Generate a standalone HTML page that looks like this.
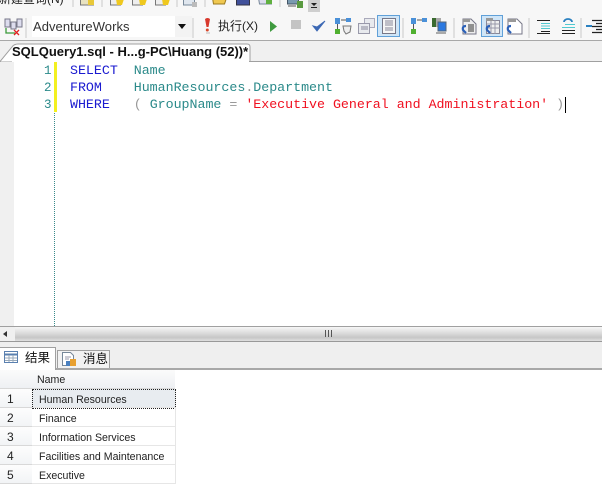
<!DOCTYPE html>
<html><head><meta charset="utf-8">
<style>
html,body{margin:0;padding:0;background:#fff}
#r{position:relative;width:602px;height:495px;overflow:hidden;background:#fff;font-family:"Liberation Sans","Noto Sans CJK SC",sans-serif}
#r>*{position:absolute}
.t{white-space:pre}
.m{font:13.33px/17px "Liberation Mono",monospace;letter-spacing:-.03px;white-space:pre;left:70px}
.k{color:#1a1ad0}.g{color:#2b8a8a}.s{color:#f01020}.o{color:#999}
.ln{font:12.5px/17px "Liberation Mono",monospace;color:#2b8a8a;left:44px;width:10px}
.rh{left:0;width:32px;height:18px;background:linear-gradient(#fdfdfd,#f2f4f6);border-bottom:1px solid #d8d8d8;font:12px/20px "Liberation Sans",sans-serif;color:#222;text-indent:7px}
.rc{left:32px;width:143px;height:18px;border-bottom:1px solid #e6e6e6;border-right:1px solid #e6e6e6;font:10.6px/23px "Liberation Sans",sans-serif;color:#222;text-indent:7px;white-space:pre;overflow:visible}
</style></head><body>
<div id="r">
<div style="left:0;top:0;width:602px;height:41px;background:#f7f7f7"></div>
<div class="t" style="left:-1px;top:-9px;font-size:12px;line-height:16px;color:#222">新建查询(N)</div>
<div style="left:0;top:41px;width:602px;height:20px;background:#f0f0f0"></div>
<div style="left:0;top:40px;width:602px;height:1px;background:#a8a8a8"></div>
<div style="left:0;top:61px;width:602px;height:1px;background:#a0a0a0"></div>

<svg style="left:0;top:0;filter:blur(.35px)" width="602" height="42" viewBox="0 0 602 42">
<g fill="none">
<!-- top row clipped icons -->
<path d="M73 0v7M102 0v7M177 0v7M205 0v7M280 0v7" stroke="#c8c8c8"/>
<path d="M80.500 -2h13v7h-13z" fill="#e8e2c0" stroke="#777"/><path d="M88 -1h6v6h-6z" fill="#e8c838"/>
<path d="M110.500 -2h10v7h-10z" fill="#eee" stroke="#777"/><path d="M116 -1h8l-2 6h-5z" fill="#efc81e"/>
<path d="M132.500 -2h10v7h-10z" fill="#eee" stroke="#777"/><path d="M139 -1h8l-2 6h-5z" fill="#efc81e"/>
<path d="M155.500 -2h10v7h-10z" fill="#eee" stroke="#777"/><path d="M162 -1h8l-2 6h-5z" fill="#efc81e"/>
<path d="M183.500 -2h11v7h-11z" fill="#dfe6ee" stroke="#789"/><path d="M192 2h5v5h-5z" fill="#bbb"/>
<path d="M212.500 -2h14l-2 6h-11z" fill="#f0c850" stroke="#9a7a20"/>
<path d="M236.500 -2h13v7h-13z" fill="#40509a" stroke="#334"/>
<path d="M258.500 -2h13v6h-12z" fill="#dde" stroke="#789"/><path d="M266 0h6v4h-6z" fill="#60b040"/>
<path d="M287.500 -1h11v5h-11z" fill="#7a9ab0" stroke="#456"/><path d="M297 1h6v7h-6z" fill="#5a9a40"/><path d="M288 6h8" stroke="#555"/>
<rect x="308" y="0" width="12" height="12" fill="#cfcfcf"/>
<path d="M311 3h6l-3 3z M311 7h6v1h-6z" fill="#222"/>
<!-- connection icon -->
<rect x="5" y="19" width="5" height="8" fill="#dde" stroke="#778"/><rect x="11" y="22" width="5" height="7" fill="#dde" stroke="#778"/><rect x="17" y="19" width="5" height="8" fill="#dde" stroke="#778"/>
<path d="M6 28v5h9" stroke="#3a9a3a" stroke-width="1.300"/><path d="M14 30l5 5M19 30l-5 5" stroke="#e02020" stroke-width="1.300"/>
<path d="M26 18v20M193 18v20" stroke="#c8c8c8"/>
<!-- ! -->
<path d="M205 19q2.500-2 5 0l-1.500 8h-2z" fill="#d8382c"/><circle cx="207.300" cy="30" r="1.500" fill="#d8482c"/><path d="M206 33h4" stroke="#bbb"/>
<path d="M270 21l7 5.500-7 5.500z" fill="#3f9a3f"/>
<rect x="291" y="20" width="10" height="9" fill="#c4c4c4"/>
<path d="M313 26l4 5 8-10-8 6z" fill="#3c68b4" stroke="#3c68b4"/>
<!-- parse/plan icons -->
<rect x="335" y="18" width="5" height="6" fill="#4a90d8"/><rect x="335" y="29" width="5" height="5" fill="#50b030"/><path d="M337.500 24v5" stroke="#555"/><rect x="346" y="18" width="5" height="4" fill="#4a90d8"/><path d="M341 20h5" stroke="#555"/>
<path d="M343 26h8l-1 6-4 2-2-3z" fill="#eee" stroke="#777"/>
<rect x="364.500" y="18.500" width="10" height="9" fill="#e8eaee" stroke="#aab"/><rect x="358.500" y="23.500" width="11" height="10" fill="#e8eaee" stroke="#99a"/><path d="M361 27h7M361 29h7" stroke="#889"/>
<rect x="377.500" y="15.500" width="22" height="21" fill="#cfe5f7" stroke="#60a0d8"/>
<rect x="382.500" y="18.500" width="13" height="15" fill="#f6f6f6" stroke="#778"/><path d="M385 21h8M385 23h8M385 25h8M385 28h8M385 30h8" stroke="#889"/>
<path d="M403 18v20M454 18v20M529 18v20M581 18v20" stroke="#c8c8c8"/>
<rect x="411" y="18" width="5" height="6" fill="#4a90d8"/><rect x="411" y="29" width="5" height="5" fill="#50b030"/><path d="M413.500 24v5M417 20h5" stroke="#555"/><rect x="422" y="18" width="5" height="4" fill="#4a90d8"/>
<rect x="432" y="18" width="4" height="9" fill="#3a6a30"/><rect x="436" y="18" width="5" height="9" fill="#aaa"/><rect x="438" y="22" width="8" height="9" fill="#2a78e0" stroke="#567"/><path d="M436 33h10" stroke="#aaa" stroke-width="2"/>
<!-- results icons -->
<path d="M463 19h8l5 5v10h-13z" fill="#eee" stroke="#778"/><path d="M468 25h6M468 27h6M468 29h6M468 31h6" stroke="#333"/><rect x="463" y="19" width="7" height="3" fill="#999"/><path d="M466 26q-4 0-3 4l3 3" stroke="#2a60b8" stroke-width="2.200"/>
<rect x="481.500" y="15.500" width="21" height="21" fill="#cfe5f7" stroke="#60a0d8"/>
<path d="M486.500 20.500h13v13h-13z" fill="#eee" stroke="#889"/><path d="M487 24h13M487 28h13M491 20v14M495 20v14" stroke="#99a"/><rect x="486" y="18" width="7" height="3" fill="#999"/><path d="M490 26q-4 0-3 4l3 3" stroke="#2a60b8" stroke-width="2.200"/>
<path d="M508 19h9l5 5v10h-14z" fill="#fff" stroke="#778"/><rect x="508" y="19" width="8" height="3" fill="#999"/><path d="M511 26q-4 0-3 4l3 3" stroke="#2a60b8" stroke-width="2.200"/>
<!-- indent -->
<path d="M537 20.500h13M541 31.500h9M537 33.500h13" stroke="#222"/><path d="M541 23.500h9M541 26h9M541 28.500h9" stroke="#50c8d0"/>
<path d="M562 30.500h13M562 33.500h13" stroke="#222"/><path d="M562 27.500h13M565 24.500h10" stroke="#50c8d0"/><path d="M564 22a4 3 0 0 1 8 0" stroke="#2a80c0" stroke-width="1.800"/>
<path d="M592 20.500h10M596 23.500h6M592 26.500h10M596 29.500h6M592 32.500h10" stroke="#222" stroke-width="1.200"/><path d="M586 26h6" stroke="#2a80c0" stroke-width="2"/>
</g>
</svg>

<div style="left:32px;top:16px;width:160px;height:21px;background:#fff"></div>
<div style="left:175px;top:16px;width:17px;height:21px;background:#f3f3f3"></div>
<div class="t" style="left:33px;top:18px;font-size:13px;line-height:17px;color:#333;letter-spacing:.05px">AdventureWorks</div>
<div style="left:178px;top:24px;width:0;height:0;border:4px solid transparent;border-top:5px solid #111;border-bottom:0"></div>
<div class="t" style="left:218px;top:18px;font-size:12px;line-height:17px;color:#222">执行(X)</div>

<svg style="left:0;top:41px" width="260" height="22" viewBox="0 0 260 22"><path d="M0 20.500 12 6Q14 3 18 3H247Q250 3 250 6V20" fill="#fff" stroke="#a0a0a0"/><path d="M12 21h237" stroke="#fff" stroke-width="2"/></svg>
<div class="t" style="left:12px;top:44px;font-size:13px;line-height:16px;font-weight:bold;color:#111">SQLQuery1.sql - H...g-PC\Huang (52))*</div>

<div style="left:0;top:62px;width:14px;height:264px;background:#f0f0f0"></div>
<div style="left:54px;top:62px;width:0;height:264px;border-left:1px dotted #3a8a8a"></div>
<div style="left:54px;top:62px;width:3px;height:50px;background:#f3f020"></div>
<div class="ln" style="top:63px">1</div>
<div class="ln" style="top:80px">2</div>
<div class="ln" style="top:97px">3</div>
<div class="m" style="top:63px"><span class="k">SELECT</span>  <span class="g">Name</span></div>
<div class="m" style="top:80px"><span class="k">FROM</span>    <span class="g">HumanResources</span><span class="o">.</span><span class="g">Department</span></div>
<div class="m" style="top:97px"><span class="k">WHERE</span>   <span class="o">(</span> <span class="g">GroupName</span> <span class="o">=</span> <span class="s">'Executive General and Administration'</span> <span class="o">)</span></div>
<div style="left:565px;top:97px;width:1px;height:16px;background:#000"></div>

<div style="left:0;top:326px;width:602px;height:1px;background:#a0a0a0"></div>
<div style="left:15px;top:327px;width:587px;height:14px;background:linear-gradient(#f6f6f6,#d8d8d8 50%,#c6c6c6 75%,#e0e0e0)"></div>
<div style="left:0;top:327px;width:15px;height:14px;background:#f0f0f0"></div>
<div style="left:3px;top:331px;width:0;height:0;border:3.500px solid transparent;border-right:4px solid #333;border-left:0"></div>
<div style="left:325px;top:330px;width:7px;height:7px;background:repeating-linear-gradient(90deg,#555 0 1px,transparent 1px 3px)"></div>
<div style="left:0;top:341px;width:602px;height:1px;background:#999"></div>
<div style="left:0;top:342px;width:602px;height:26px;background:#efefef"></div>
<div style="left:0;top:368px;width:602px;height:2px;background:#a8a8a8"></div>
<div style="left:0;top:347px;width:56px;height:23px;background:#fff;border-right:1px solid #a0a0a0;border-top:1px solid #a0a0a0;box-sizing:border-box"></div>
<div style="left:57px;top:350px;width:53px;height:18px;background:#f2f2f2;border:1px solid #a0a0a0;border-bottom:0;box-sizing:border-box"></div>
<svg style="left:0;top:348px;filter:blur(.3px)" width="110" height="20" viewBox="0 0 110 20">
<rect x="4.500" y="3.500" width="13" height="11" fill="#fff" stroke="#5a80b0"/><path d="M4 6.500h14" stroke="#5a80b0" stroke-width="2"/><path d="M9 7v7M13 7v7M5 10h12M5 12.500h12" stroke="#9ab"/>
<path d="M62.500 4.500h8l3 3v10h-11z" fill="#fff" stroke="#789"/><path d="M65 9h6M65 11h4" stroke="#99a"/><rect x="70" y="11" width="6" height="7" fill="#e8a030"/><rect x="66" y="13" width="4" height="5" fill="#4a80c0"/>
</svg>
<div class="t" style="left:25px;top:350px;font-size:12.500px;line-height:17px;color:#111">结果</div>
<div class="t" style="left:83px;top:351px;font-size:12.500px;line-height:17px;color:#111">消息</div>

<div style="left:0;top:370px;width:32px;height:18px;background:linear-gradient(#fbfbfb,#eef0f3);border-bottom:1px solid #d8d8d8"></div>
<div style="left:32px;top:370px;width:143px;height:18px;background:linear-gradient(#fbfbfb,#eef0f3);border-bottom:1px solid #d8d8d8;font:10.600px/21px 'Liberation Sans',sans-serif;color:#222;text-indent:5px">Name</div>
<div class="rh" style="top:389px">1</div><div class="rc" style="top:389px;background:#e8ecf0">Human Resources</div>
<div style="left:32px;top:389px;width:142px;height:18px;border:1px dotted #222"></div>
<div class="rh" style="top:408px">2</div><div class="rc" style="top:408px">Finance</div>
<div class="rh" style="top:427px">3</div><div class="rc" style="top:427px">Information Services</div>
<div class="rh" style="top:446px">4</div><div class="rc" style="top:446px">Facilities and Maintenance</div>
<div class="rh" style="top:465px">5</div><div class="rc" style="top:465px">Executive</div>
</div>
</body></html>
